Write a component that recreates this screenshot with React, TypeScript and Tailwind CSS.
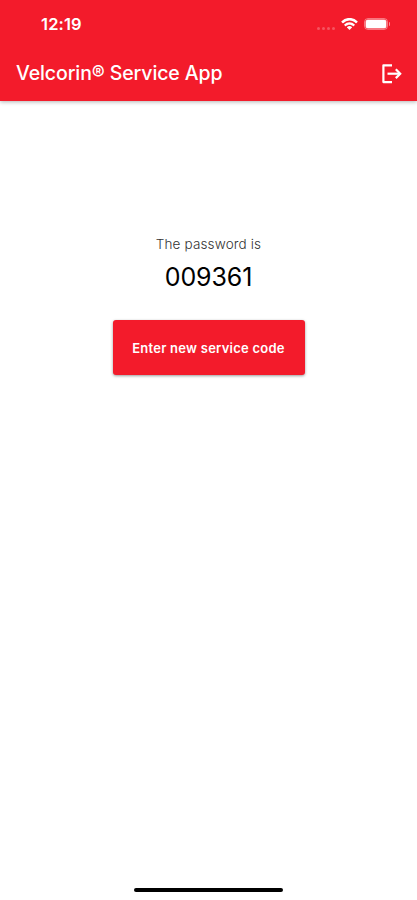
import type { ReactNode } from "react";

const BRAND = "bg-[#f31b2b]";

function WifiIcon() {
  return (
    <svg viewBox="0 0 17 12" className="h-[13px] w-[17px]" fill="currentColor" preserveAspectRatio="none">
      <path d="M8.5 2.3c2.4 0 4.6.9 6.3 2.5.1.1.3.1.5 0l1.2-1.2c.2-.2.2-.4 0-.5a11.6 11.6 0 0 0-16 0c-.2.1-.2.3 0 .5l1.2 1.2c.2.1.4.1.5 0a9 9 0 0 1 6.3-2.5z" />
      <path d="M8.5 6.2c1.3 0 2.6.5 3.6 1.4.1.1.4.1.5 0l1.2-1.2c.1-.2.1-.4 0-.5a7.8 7.8 0 0 0-10.6 0c-.1.1-.1.3 0 .5l1.2 1.2c.1.1.4.1.5 0 1-.9 2.3-1.4 3.6-1.4z" />
      <path d="M10.9 8.8c.1-.1.1-.4 0-.5a3.7 3.7 0 0 0-4.8 0c-.1.1-.1.4 0 .5l2.1 2.1c.2.2.4.2.6 0z" />
    </svg>
  );
}

function LogoutIcon() {
  return (
    <svg
      viewBox="0 0 24 24"
      className="h-6 w-6"
      fill="none"
      stroke="currentColor"
      strokeWidth="2.2"
      strokeLinejoin="round"
    >
      <path d="M13 3.3H4.4v16.8H13" />
      <path d="M8.5 11.7h12" />
      <path d="M16.8 7.3l4.400 4.400-4.400 4.400" strokeLinejoin="miter" />
    </svg>
  );
}

function StatusBar() {
  return (
    <div className="flex h-12 items-center justify-between pr-[27px] pl-[41px] text-white">
      <span className="text-[16.5px] font-semibold tracking-[0.15px]">12:19</span>
      <div className="flex items-center">
        {/* No signal */}
        <div className="mt-2 mr-[6px] flex gap-[2px]">
          {[0, 1, 2, 3].map((dot) => (
            <span key={dot} className="h-[3px] w-[3px] rounded-full bg-white/25" />
          ))}
        </div>
        <WifiIcon />
        {/* Battery */}
        <div className="ml-[6px] h-3 w-6 rounded-[4px] border border-white/40 p-px">
          <div className="h-full w-full rounded-[2px] bg-white ring-[0.5px] ring-white/80" />
        </div>
        <span className="ml-px h-1 w-px rounded-r bg-white/50" />
      </div>
    </div>
  );
}

function AppBar({ title, action }: { title: string; action: ReactNode }) {
  return (
    <div className="flex h-[52.5px] items-center justify-between pr-[14px] pb-px pl-4 text-white">
      <h1 className="text-[19.5px] font-medium tracking-[-0.1px]">{title}</h1>
      {action}
    </div>
  );
}

export default function App() {
  return (
    <div className="flex h-screen flex-col bg-white font-['Inter','Liberation_Sans',sans-serif]">
      <header className={`${BRAND} shrink-0 shadow-[0_1px_4px_rgba(0,0,0,0.3)]`}>
        <StatusBar />
        <AppBar
          title="Velcorin® Service App"
          action={
            <button aria-label="Log out">
              <LogoutIcon />
            </button>
          }
        />
      </header>

      <main className="flex flex-1 flex-col items-center pt-[133.5px]">
        <p className="text-[13.5px] leading-5 font-light tracking-[0.15px] text-[#333]">The password is</p>
        <p className="mt-[7px] text-[25px] leading-8 tracking-[-0.1px] text-black">009361</p>
        <button
          className={`${BRAND} mt-[27px] h-[55px] w-48 rounded-[3px] pt-[2px] text-[13px] font-semibold tracking-[0.25px] text-white shadow-[0_1px_3px_rgba(0,0,0,0.4)]`}
        >
          Enter new service code
        </button>
      </main>

      {/* Home indicator */}
      <div className="mb-2 h-1 w-[149px] shrink-0 self-center rounded-full bg-black" />
    </div>
  );
}
